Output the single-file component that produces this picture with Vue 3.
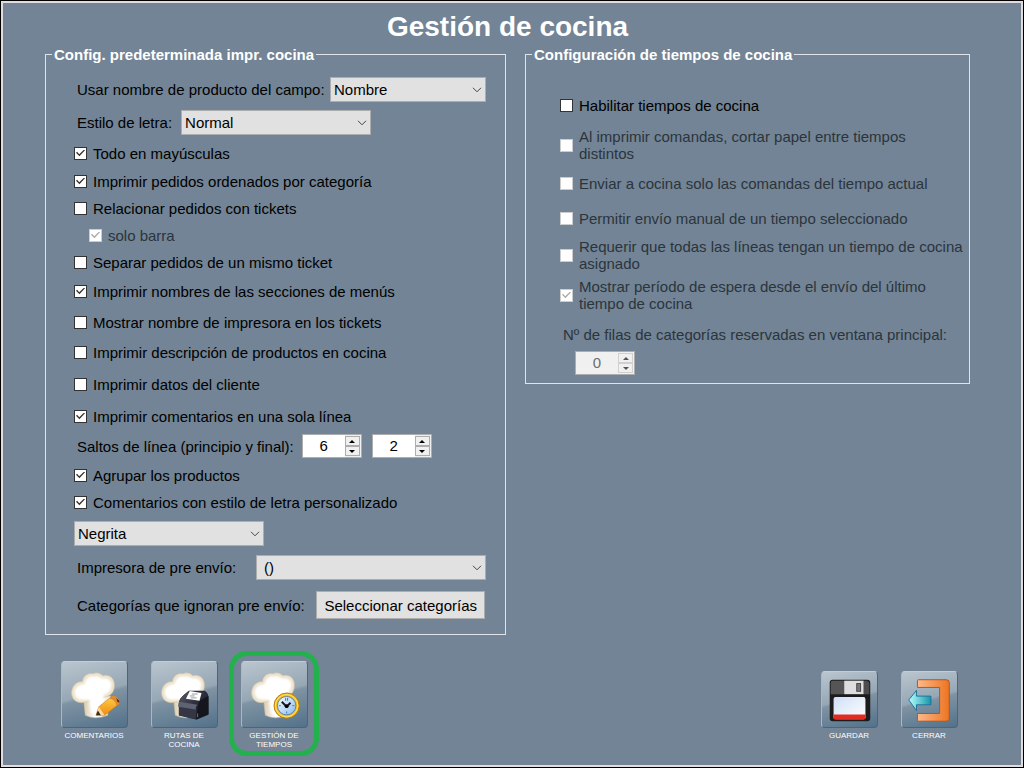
<script setup>
import { reactive } from 'vue'

const left = reactive([
  { id: 'campo', kind: 'select', size: 'r34', label: 'Usar nombre de producto del campo:', value: 'Nombre', width: 'w156' },
  { id: 'estilo', kind: 'select', size: 'r32', label: 'Estilo de letra:', value: 'Normal', width: 'w190', near: true },
  { id: 'mayus', kind: 'check', size: 'r30', label: 'Todo en mayúsculas', on: true },
  { id: 'orden', kind: 'check', size: 'r26', label: 'Imprimir pedidos ordenados por categoría', on: true },
  { id: 'tickets', kind: 'check', size: 'r28', label: 'Relacionar pedidos con tickets', on: false },
  { id: 'barra', kind: 'check', size: 'r26', label: 'solo barra', on: true, disabled: true, sub: true },
  { id: 'separar', kind: 'check', size: 'r28', label: 'Separar pedidos de un mismo ticket', on: false },
  { id: 'secciones', kind: 'check', size: 'r30', label: 'Imprimir nombres de las secciones de menús', on: true },
  { id: 'impresora', kind: 'check', size: 'r32', label: 'Mostrar nombre de impresora en los tickets', on: false },
  { id: 'descripcion', kind: 'check', size: 'r28', label: 'Imprimir descripción de productos en cocina', on: false },
  { id: 'cliente', kind: 'check', size: 'r36', label: 'Imprimir datos del cliente', on: false },
  { id: 'unalinea', kind: 'check', size: 'r28', label: 'Imprimir comentarios en una sola línea', on: true },
  { id: 'saltos', kind: 'spins', size: 'r32', label: 'Saltos de línea (principio y final):', values: [6, 2] },
  { id: 'agrupar', kind: 'check', size: 'r26', label: 'Agrupar los productos', on: true },
  { id: 'personalizado', kind: 'check', size: 'r28', label: 'Comentarios con estilo de letra personalizado', on: true },
])

const right = reactive([
  { id: 'habilitar', size: 'r40', label: 'Habilitar tiempos de cocina', on: false },
  { id: 'cortar', size: 'r40', label: 'Al imprimir comandas, cortar papel entre tiempos distintos', on: false, disabled: true, narrow: true },
  { id: 'enviar', size: 'r36', label: 'Enviar a cocina solo las comandas del tiempo actual', on: false, disabled: true },
  { id: 'manual', size: 'r34', label: 'Permitir envío manual de un tiempo seleccionado', on: false, disabled: true },
  { id: 'requerir', size: 'r40', label: 'Requerir que todas las líneas tengan un tiempo de cocina asignado', on: false, disabled: true },
  { id: 'espera', size: 'r40', label: 'Mostrar período de espera desde el envío del último tiempo de cocina', on: true, disabled: true, narrow: true },
])

const filas = reactive({ value: 0 })

const tiles = [
  { id: 'comentarios', label: 'COMENTARIOS' },
  { id: 'rutas', label: 'RUTAS DE COCINA' },
  { id: 'tiempos', label: 'GESTIÓN DE TIEMPOS', active: true },
]
</script>

<template>
  <main class="window">
    <h1>Gestión de cocina</h1>

    <div class="panels">
      <fieldset class="panel">
        <legend>Config. predeterminada impr. cocina</legend>
        <template v-for="row in left" :key="row.id">
          <label v-if="row.kind === 'check'" class="row check" :class="[row.size, { sub: row.sub, off: row.disabled }]">
            <input v-model="row.on" type="checkbox" :disabled="row.disabled">
            <span>{{ row.label }}</span>
          </label>
          <div v-else-if="row.kind === 'select'" class="row field" :class="row.size">
            <label :for="row.id">{{ row.label }}</label>
            <span class="combo" :class="[row.width, { near: row.near }]">
              <select :id="row.id"><option>{{ row.value }}</option></select>
              <svg viewBox="0 0 10 6"><path d="M1 .8 5 4.8 9 .8" /></svg>
            </span>
          </div>
          <div v-else class="row field" :class="row.size">
            <label :for="row.id + 0">{{ row.label }}</label>
            <span class="spins">
              <span v-for="(n, i) in row.values" :key="i" class="spin">
                <input :id="row.id + i" v-model="row.values[i]" type="text" inputmode="numeric" :aria-label="row.label">
                <span class="arrows">
                  <button type="button" aria-label="Aumentar" @click="row.values[i]++"><svg viewBox="0 0 6 3"><path d="M0 3 3 0 6 3z" /></svg></button>
                  <button type="button" aria-label="Reducir" @click="row.values[i]--"><svg viewBox="0 0 6 3"><path d="M0 0 3 3 6 0z" /></svg></button>
                </span>
              </span>
            </span>
          </div>
        </template>
        <div class="row r34">
          <span class="combo w190">
            <select aria-label="Estilo de comentarios"><option>Negrita</option></select>
            <svg viewBox="0 0 10 6"><path d="M1 .8 5 4.8 9 .8" /></svg>
          </span>
        </div>
        <div class="row r34 field">
          <label for="preenvio">Impresora de pre envío:</label>
          <span class="combo w230 inset">
            <select id="preenvio"><option>()</option></select>
            <svg viewBox="0 0 10 6"><path d="M1 .8 5 4.8 9 .8" /></svg>
          </span>
        </div>
        <div class="row r42 field">
          <span id="ignoran">Categorías que ignoran pre envío:</span>
          <button type="button" class="pick" aria-describedby="ignoran">Seleccionar categorías</button>
        </div>
      </fieldset>

      <fieldset class="panel times">
        <legend>Configuración de tiempos de cocina</legend>
        <label v-for="row in right" :key="row.id" class="row check" :class="[row.size, { off: row.disabled, narrow: row.narrow }]">
          <input v-model="row.on" type="checkbox" :disabled="row.disabled">
          <span>{{ row.label }}</span>
        </label>
        <div class="rows off">
          <label for="filas">Nº de filas de categorías reservadas en ventana principal:</label>
          <span class="spin">
            <input id="filas" v-model="filas.value" type="text" disabled>
            <span class="arrows">
              <button type="button" disabled aria-label="Aumentar"><svg viewBox="0 0 6 3"><path d="M0 3 3 0 6 3z" /></svg></button>
              <button type="button" disabled aria-label="Reducir"><svg viewBox="0 0 6 3"><path d="M0 0 3 3 6 0z" /></svg></button>
            </span>
          </span>
        </div>
      </fieldset>
    </div>

    <svg class="defs" aria-hidden="true">
      <defs>
        <linearGradient id="hatbase" x1="0" x2="1" y1="0" y2="0">
          <stop offset="0" stop-color="#d9caa8" /><stop offset=".45" stop-color="#fff" /><stop offset="1" stop-color="#efe7d3" />
        </linearGradient>
        <linearGradient id="pencil" x1="0" x2="0" y1="0" y2="1">
          <stop offset="0" stop-color="#ffd34a" /><stop offset="1" stop-color="#f08a10" />
        </linearGradient>
        <linearGradient id="dark" x1="0" x2="1" y1="0" y2="1">
          <stop offset="0" stop-color="#5b5d6c" /><stop offset=".5" stop-color="#2c2d3a" /><stop offset="1" stop-color="#0c0c14" />
        </linearGradient>
        <linearGradient id="door" x1="0" x2="1" y1="0" y2="0">
          <stop offset="0" stop-color="#fdb98c" /><stop offset="1" stop-color="#ed7420" />
        </linearGradient>
        <linearGradient id="arrow" x1="0" x2="1" y1="0" y2="0">
          <stop offset="0" stop-color="#b6ffff" /><stop offset="1" stop-color="#1496a4" />
        </linearGradient>
        <linearGradient id="paper" x1="0" x2="1" y1="0" y2="1">
          <stop offset="0" stop-color="#cfdff6" /><stop offset="1" stop-color="#fff" />
        </linearGradient>
        <linearGradient id="face" x1="0" x2="1" y1="0" y2="1">
          <stop offset="0" stop-color="#f4fbff" /><stop offset="1" stop-color="#8bbcf0" />
        </linearGradient>
        <filter id="soft" x="-20%" y="-20%" width="140%" height="140%"><feGaussianBlur stdDeviation="1.2" /></filter>
        <g id="toque">
          <path d="M22 36 24 55Q34 60 47 55L50 35z" fill="url(#hatbase)" stroke="#cfc0a0" stroke-width=".6" />
          <path d="M20 42C12 42 9 35 10 30 11 23 16 20 21 20 22 13 28 11 32 12 36 10 40 12 42 14 49 12 54 17 54 23 54.500 31 50 35 45 36 36 38 28 41 20 42z" fill="#ebe1ca" stroke="#cfc0a0" stroke-width=".6" />
          <path d="M20 39C15 39 12.500 34 13 30 14 25 19 23 23 23 25 16 29 14 33 15 37 14 39 15 41 17 47 16 51 19 51 23 51 30 47 33 43 34L43 53Q35 56 30 52L28 39z" fill="#fff" filter="url(#soft)" />
        </g>
      </defs>
    </svg>

    <footer class="bar">
      <nav class="tiles">
        <button v-for="tile in tiles" :key="tile.id" type="button" class="tile" :class="{ active: tile.active }">
          <span class="face">
            <svg viewBox="0 0 67 67">
              <use href="#toque" />
              <g v-if="tile.id === 'comentarios'">
                <path d="M35 55 38 46 52 35Q57 35 59 40L59 43 44 55z" fill="url(#pencil)" stroke="#c87408" stroke-width=".6" />
                <path d="M52 35Q57 35 59 40L59 43 56 45Q55 39 49 38z" fill="#d98a32" />
                <path d="M56 37 59 40V42L57 41z" fill="#6b2413" />
                <path d="M38 46 44 55 35 55z" fill="#f8d6a0" /><path d="M37 50 40 55H35z" fill="#3c2a1c" />
              </g>
              <g v-if="tile.id === 'rutas'">
                <path d="M28 42Q28 38 33 34L38 30 54 30Q57 31 58 36L58 54 46 59 28 55z" fill="url(#dark)" stroke="#14141c" stroke-width=".6" />
                <path d="M28 46 46 48 45 59 28 55z" fill="#343644" />
                <path d="M28 41 47 44Q45 45 45 49L27 46Q27 43 28 41z" fill="#5f6273" />
                <path d="M49 40 58 35V53L46 59 47 46z" fill="#15151e" />
                <path d="M35 38 39 30 51 32 49 40z" fill="#fff" /><path d="M41 33H47M39 35H44M40 37H46" stroke="#999" fill="none" />
                <path d="M47 53V57" stroke="#6b7090" />
              </g>
              <g v-if="tile.id === 'tiempos'">
                <circle cx="46" cy="45" r="13" fill="#f5bb18" stroke="#b87b08" />
                <circle cx="46" cy="45" r="11.500" fill="none" stroke="#ffe572" />
                <circle cx="46" cy="45" r="9.500" fill="url(#face)" stroke="#5a83b0" />
                <path d="M45 37V40M47 37V40M46 51V53M38 45H40M52 45H54" stroke="#4473ad" />
                <path d="M41 41 46 46 50 42" fill="none" stroke="#171717" stroke-width="2" />
                <circle cx="46" cy="45.500" r="2" />
              </g>
            </svg>
          </span>
          <span class="name">{{ tile.label }}</span>
        </button>
      </nav>
      <div class="tiles end">
        <button type="button" class="tile small">
          <span class="face">
            <svg viewBox="0 0 57 57">
              <rect x="8" y="8" width="42" height="43" rx="3" fill="#1c1c1c" />
              <path d="M9 11Q9 9 11 9H23V23H9z" fill="#555" />
              <path d="M42 9H47L49 11V23H42z" fill="#4c4c4c" />
              <rect x="23" y="9" width="20" height="14" fill="#dedede" />
              <rect x="36" y="12" width="4" height="8" fill="#777" stroke="#444" />
              <rect x="12" y="26" width="33" height="23" rx="2" fill="url(#paper)" />
              <path d="M12 44H45V49H12z" fill="#e02c22" />
            </svg>
          </span>
          <span class="name">GUARDAR</span>
        </button>
        <button type="button" class="tile small">
          <span class="face">
            <svg viewBox="0 0 57 57">
              <path d="M17 8H46Q49 8 49 11V48Q49 51 46 51H17Q16 51 16 50V43H39V16H16V9Q16 8 17 8z" fill="url(#door)" stroke="#a8562a" />
              <path d="M7 29 15 19V25H30V34H15V40z" fill="url(#arrow)" stroke="#236f9c" />
            </svg>
          </span>
          <span class="name">CERRAR</span>
        </button>
      </div>
    </footer>
  </main>
</template>

<style>
body {
  background: #728495;
}
</style>

<style scoped>
* {
  box-sizing: border-box;
}
.window {
  min-height: 100vh;
  padding: 10px 53px 0 44px;
  border: 1px solid #000;
  background: #728495;
  box-shadow: inset 0 0 0 2px #e3dcdf;
  color: #000;
  font: 15px/17px "Liberation Sans", Arial, sans-serif;
}
.window button,
.window input,
.window select {
  margin: 0;
  font: inherit;
  color: inherit;
}
h1 {
  margin: 0 0 3px;
  color: #fff;
  font-size: 28px;
  line-height: 32px;
  text-align: center;
}
.panels {
  display: grid;
  grid-template-columns: 461fr 445fr;
  gap: 19px;
  align-items: start;
}
.panel {
  min-width: 0;
  margin: 0;
  padding: 9px 19px 8px 28px;
  border: 1px solid #e0e4e8;
}
legend {
  margin-left: -22px;
  padding: 0 2px;
  color: #fff;
  font-weight: bold;
}
.row {
  display: flex;
  align-items: center;
}
.r26 { height: 26px; }
.r28 { height: 28px; }
.r30 { height: 30px; }
.r32 { height: 32px; }
.r34 { height: 34px; }
.r36 { height: 36px; }
.r40 { height: 40px; }
.r42 { height: 42px; }
.field {
  justify-content: space-between;
  padding-left: 3px;
}
.check {
  gap: 6px;
}
.check.sub {
  padding-left: 15px;
}
.check.narrow {
  padding-right: 24px;
}
.check input {
  flex: none;
  display: grid;
  place-items: center;
  width: 13px;
  height: 13px;
  border: 1px solid #333;
  background: #fff;
  appearance: none;
}
.check input:checked::before {
  content: "";
  width: 9px;
  height: 7px;
  background: #333;
  clip-path: polygon(0 45%, 12% 32%, 36% 68%, 90% 0, 100% 12%, 38% 95%);
}
.off {
  color: #2c343c;
}
.check input:disabled {
  border-color: #ccc;
}
.check input:disabled::before {
  background: #aaa;
}
.combo {
  position: relative;
  display: block;
  color: #000;
}
.combo.near {
  margin-right: auto;
  margin-left: 9px;
}
.w156 { width: 156px; }
.w190 { width: 190px; }
.w230 { width: 230px; }
.combo select {
  display: block;
  width: 100%;
  height: 25px;
  padding: 0 20px 0 3px;
  border: 1px solid #adadad;
  border-radius: 0;
  background: #e1e1e1;
  appearance: none;
}
.combo.inset select {
  padding-left: 7px;
}
.combo svg {
  position: absolute;
  top: 10px;
  right: 4px;
  width: 10px;
  height: 6px;
  fill: none;
  stroke: #444;
  pointer-events: none;
}
.spins {
  display: flex;
  gap: 10px;
  margin-right: auto;
  margin-left: 8px;
}
.spin {
  display: flex;
  width: 60px;
  height: 24px;
  border: 1px solid #adadad;
  background: #fff;
}
.spin input {
  flex: 1;
  min-width: 0;
  padding: 0 0 2px;
  border: 0;
  background: none;
  text-align: center;
}
.arrows {
  display: flex;
  flex-direction: column;
  width: 16px;
  padding: 1px 1px 1px 0;
  background: #f0f0f0;
}
.arrows button {
  flex: 1;
  display: grid;
  place-items: center;
  min-height: 0;
  padding: 0;
  border: 1px solid #adadad;
  background: #f0f0f0;
}
.arrows svg {
  width: 6px;
  height: 3px;
}
.window .pick {
  height: 28px;
  margin-right: 1px;
  padding: 0 7px;
  border: 1px solid #adadad;
  background: #e1e1e1;
}
.times {
  padding: 22px 2px 8px 34px;
}
.times legend {
  margin-left: -28px;
}
.rows {
  display: grid;
  gap: 8px;
  padding: 11px 0 0 3px;
}
.rows .spin {
  margin-left: 12px;
  background: #f0f0f0;
  color: #6d6d6d;
}
.rows .arrows button {
  border-color: #d0d0d0;
}
.rows .arrows path {
  fill: #555;
}
.defs {
  position: absolute;
  width: 0;
  height: 0;
}
.bar {
  display: flex;
  justify-content: space-between;
  align-items: flex-start;
  padding: 16px 1px 8px 4px;
}
.tiles {
  display: flex;
}
.tiles.end {
  padding-top: 10px;
}
.tile {
  display: flex;
  flex-direction: column;
  align-items: center;
  gap: 3px;
  width: 90px;
  padding: 5px 6px;
  border: 5px solid transparent;
  border-radius: 18px;
  background: none;
}
.tile.active {
  height: 105px;
  border-color: #22b14c;
}
.tile.small {
  width: 80px;
}
.face {
  width: 67px;
  height: 67px;
  border: 1px solid;
  border-color: #c0ced8 #4b667c #4b667c #a5b9c7;
  border-radius: 4px;
  background: linear-gradient(165deg, #bac6cf 0%, #96a7b5 48%, #7f93a3 52%, #52718a 100%);
}
.small .face {
  width: 57px;
  height: 57px;
}
.face svg {
  display: block;
  width: 100%;
  height: 100%;
}
.name {
  width: 64px;
  color: #fff;
  font-size: 8px;
  line-height: 9px;
}
</style>
